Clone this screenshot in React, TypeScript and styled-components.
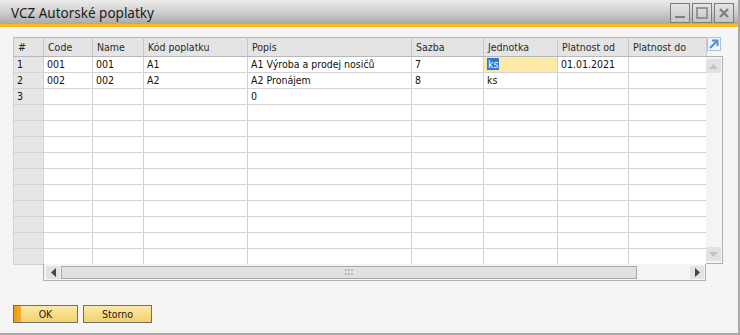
import React from "react"
import styled, { createGlobalStyle } from "styled-components"

const GlobalStyle = createGlobalStyle`
  html, body {
    margin: 0;
    padding: 0;
    background: #ffffff;
  }
  body {
    font-family: "DejaVu Sans Condensed", "DejaVu Sans", "Liberation Sans", sans-serif;
  }
`

const columns = [
  { title: "#", width: 30 },
  { title: "Code", width: 49 },
  { title: "Name", width: 51 },
  { title: "Kód poplatku", width: 104 },
  { title: "Popis", width: 164 },
  { title: "Sazba", width: 72 },
  { title: "Jednotka", width: 74 },
  { title: "Platnost od", width: 71 },
  { title: "Platnost do", width: 78 },
]

const rows = [
  ["1", "001", "001", "A1", "A1 Výroba a prodej nosičů", "7", "ks", "01.01.2021", ""],
  ["2", "002", "002", "A2", "A2 Pronájem", "8", "ks", "", ""],
  ["3", "", "", "", "0", "", "", "", ""],
]

const TOTAL_ROWS = 13

const Window = styled.div`
  width: 740px;
  height: 335px;
  box-sizing: border-box;
  display: flex;
  flex-direction: column;
  background: #f4f4f4;
  border-right: 2px solid #a9a9a9;
  border-bottom: 2px solid #a9a9a9;
`

const TitleBar = styled.div`
  height: 24px;
  display: flex;
  align-items: center;
  justify-content: space-between;
  padding: 0 4px 0 11px;
  background: linear-gradient(#ececec, #d2d2d2 45%, #a9a9a9);
`

const Title = styled.div`
  font-family: "Noto Sans", "DejaVu Sans", sans-serif;
  font-size: 13.5px;
  color: #1c1c1c;
  margin-top: 1px;
`

const WinButtons = styled.div`
  display: flex;
  gap: 2px;
  margin-top: 2px;
`

const WinButton = styled.div`
  width: 18px;
  height: 18px;
  border: 1px solid #7b7b7b;
  background: linear-gradient(#e6e6e6, #c4c4c4);
  display: flex;
  align-items: center;
  justify-content: center;
`

const Accent = styled.div`
  height: 3px;
  background: #fbb817;
`

const Body = styled.div`
  flex: 1;
  display: flex;
  flex-direction: column;
  padding: 10px 0 0 13px;
  margin-right: 3px;
  margin-bottom: 4px;
  background: #f5f5f5;
`

const GridFrame = styled.div`
  display: grid;
  grid-template-columns: 693px 17px;
  grid-template-rows: 19px 208px 17px;
`

const Table = styled.table`
  grid-row: 1 / 3;
  grid-column: 1;
  border-collapse: collapse;
  table-layout: fixed;
  width: 693px;
  font-size: 10.5px;
  color: #111;
  border-left: 1px solid #b4b4b4;
  border-top: 1px solid #b4b4b4;
`

const HeadCell = styled.th`
  height: 18px;
  padding: 0 0 0 4px;
  font-weight: normal;
  text-align: left;
  color: #2a2a2a;
  background: #e4e4e4;
  border: 1px solid #c9c9c9;
  border-top: none;
  border-bottom: 1px solid #b8b8b8;
  white-space: nowrap;
  overflow: hidden;
`

const Cell = styled.td<{ $rowHead?: boolean; $active?: boolean }>`
  height: 15px;
  padding: 0 0 0 3px;
  background: ${(p) => (p.$rowHead ? "#e6e6e6" : p.$active ? "#feeaa6" : "#ffffff")};
  border: 1px solid #d3d3d3;
  border-top: none;
  white-space: nowrap;
  overflow: hidden;
  line-height: 15px;
`

const Selected = styled.span`
  background: #3078d6;
  color: #ffffff;
  padding: 0 1px;
`

const ExpandSlot = styled.div`
  grid-row: 1;
  grid-column: 2;
  display: flex;
  align-items: flex-start;
  padding-left: 1px;
`

const VScroll = styled.div`
  grid-row: 2;
  grid-column: 2;
  box-sizing: border-box;
  border: 1px solid #b0b0b0;
  border-left: none;
  background: #f4f4f4;
  display: flex;
  flex-direction: column;
  justify-content: space-between;
  padding: 2px 1px 2px 0;
`

const ArrowBox = styled.div<{ $w?: number; $h?: number }>`
  width: ${(p) => p.$w ?? 15}px;
  height: ${(p) => p.$h ?? 14}px;
  background: #e2e2e2;
  display: flex;
  align-items: center;
  justify-content: center;
  flex-shrink: 0;
`

const HScrollRow = styled.div`
  grid-row: 3;
  grid-column: 1;
  display: flex;
`

const RowHeadGap = styled.div`
  width: 30px;
`

const HScroll = styled.div`
  flex: 1;
  box-sizing: border-box;
  border: 1px solid #b0b0b0;
  border-top: none;
  background: #f4f4f4;
  display: flex;
  align-items: center;
  padding: 1px 1px 1px 2px;
  gap: 1px;
`

const Thumb = styled.div`
  width: 576px;
  height: 13px;
  box-sizing: border-box;
  border: 1px solid #a8a8a8;
  background: #e1e1e1;
  display: flex;
  align-items: center;
  justify-content: center;
`

const Spacer = styled.div`
  flex: 1;
`

const Footer = styled.div`
  display: flex;
  gap: 5px;
  margin-top: 24px;
`

const Button = styled.div<{ $primary?: boolean; $w: number }>`
  width: ${(p) => p.$w}px;
  height: 18px;
  box-sizing: border-box;
  border: 1px solid #6f6f6f;
  background: ${(p) =>
    p.$primary
      ? "linear-gradient(90deg, #ef9a1a 0, #f3ab2a 7px, transparent 7px), linear-gradient(#fae9a9, #f4d168)"
      : "linear-gradient(#fae9a9, #f4d168)"};
  display: flex;
  align-items: center;
  justify-content: center;
  font-size: 10.5px;
  color: #1a1a1a;
`

const Grip = () => (
  <svg width="9" height="7" viewBox="0 0 9 7">
    {[0, 3, 6].map((x) =>
      [0, 4].map((y) => <rect key={`${x}-${y}`} x={x} y={y} width="2" height="2" fill="#b8b8b8" />)
    )}
  </svg>
)

export default function App() {
  const body = Array.from({ length: TOTAL_ROWS }, (_, i) => rows[i] ?? Array(9).fill(""))

  return (
    <>
      <GlobalStyle />
      <Window>
        <TitleBar>
          <Title>VCZ Autorské poplatky</Title>
          <WinButtons>
            <WinButton>
              <svg width="12" height="12" viewBox="0 0 12 12">
                <rect x="1" y="9" width="10" height="2" fill="#808080" />
              </svg>
            </WinButton>
            <WinButton>
              <svg width="12" height="12" viewBox="0 0 12 12">
                <rect x="1" y="1" width="10" height="10" fill="none" stroke="#808080" strokeWidth="1.5" />
              </svg>
            </WinButton>
            <WinButton>
              <svg width="12" height="12" viewBox="0 0 12 12">
                <path d="M2 2 L10 10 M10 2 L2 10" stroke="#808080" strokeWidth="2.4" />
              </svg>
            </WinButton>
          </WinButtons>
        </TitleBar>
        <Accent />
        <Body>
          <GridFrame>
            <Table>
              <colgroup>
                {columns.map((c) => (
                  <col key={c.title} style={{ width: c.width }} />
                ))}
              </colgroup>
              <thead>
                <tr>
                  {columns.map((c) => (
                    <HeadCell key={c.title}>{c.title}</HeadCell>
                  ))}
                </tr>
              </thead>
              <tbody>
                {body.map((r, ri) => (
                  <tr key={ri}>
                    {r.map((v, ci) => {
                      const active = ri === 0 && ci === 6
                      return (
                        <Cell key={ci} $rowHead={ci === 0} $active={active}>
                          {active ? <Selected>{v}</Selected> : v}
                        </Cell>
                      )
                    })}
                  </tr>
                ))}
              </tbody>
            </Table>
            <ExpandSlot>
              <svg width="14" height="14" viewBox="0 0 14 14">
                <rect x="0.5" y="0.5" width="13" height="13" fill="#eef3fa" stroke="#a9c4e4" />
                <path d="M3 11 L10 4 M5 3.5 H10.5 V9" stroke="#5b8fd0" strokeWidth="2" fill="none" />
              </svg>
            </ExpandSlot>
            <VScroll>
              <ArrowBox>
                <svg width="9" height="5" viewBox="0 0 9 5">
                  <path d="M0 5 L4.5 0 L9 5 Z" fill="#c2c2c2" />
                </svg>
              </ArrowBox>
              <ArrowBox>
                <svg width="9" height="5" viewBox="0 0 9 5">
                  <path d="M0 0 L4.5 5 L9 0 Z" fill="#c2c2c2" />
                </svg>
              </ArrowBox>
            </VScroll>
            <HScrollRow>
              <RowHeadGap />
              <HScroll>
                <ArrowBox $w={14} $h={13}>
                  <svg width="5" height="9" viewBox="0 0 5 9">
                    <path d="M5 0 L0 4.5 L5 9 Z" fill="#444" />
                  </svg>
                </ArrowBox>
                <Thumb>
                  <Grip />
                </Thumb>
                <Spacer />
                <ArrowBox $w={14} $h={13}>
                  <svg width="5" height="9" viewBox="0 0 5 9">
                    <path d="M0 0 L5 4.5 L0 9 Z" fill="#444" />
                  </svg>
                </ArrowBox>
              </HScroll>
            </HScrollRow>
          </GridFrame>
          <Footer>
            <Button $primary $w={65}>OK</Button>
            <Button $w={69}>Storno</Button>
          </Footer>
        </Body>
      </Window>
    </>
  )
}
